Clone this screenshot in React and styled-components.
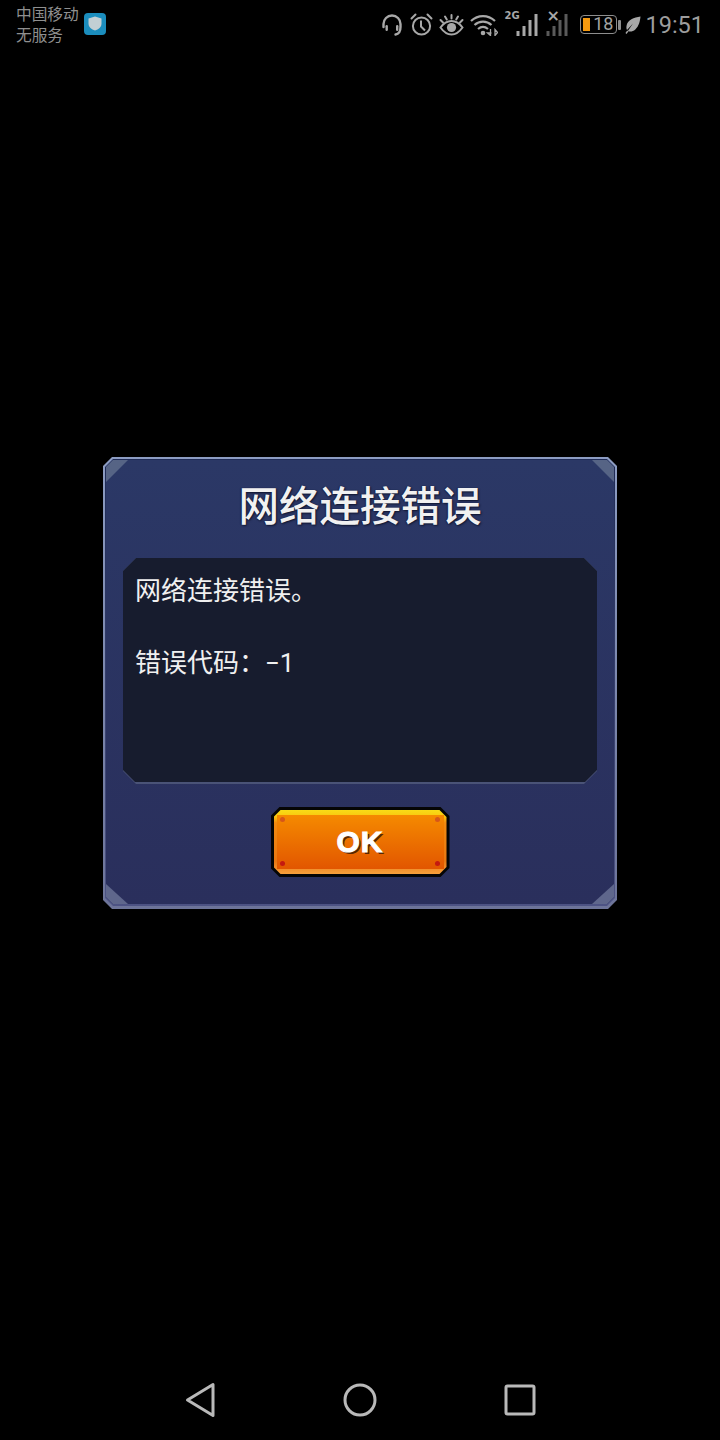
import React from 'react'
import styled, { createGlobalStyle } from 'styled-components'

const chamfer = (n) => `polygon(${n}px 0, calc(100% - ${n}px) 0, 100% ${n}px, 100% calc(100% - ${n}px), calc(100% - ${n}px) 100%, ${n}px 100%, 0 calc(100% - ${n}px), 0 ${n}px)`

const cjk = `"Noto Sans CJK SC", "Noto Sans", sans-serif`

const GlobalStyle = createGlobalStyle`
	html, body {
		margin: 0;
		padding: 0;
		background: #000;
	}
	* {
		box-sizing: border-box;
	}
`

const Screen = styled.div`
	width: 720px;
	height: 1440px;
	background: #000;
	display: flex;
	flex-direction: column;
	overflow: hidden;
`
const StatusBar = styled.div`
	height: 48px;
	padding: 3px 16px 0;
	display: flex;
	justify-content: space-between;
	align-items: flex-start;
	color: #9d9d9d;
`
const Carrier = styled.div`
	display: flex;
	align-items: center;
	gap: 5px;
`
const CarrierText = styled.div`
	font-family: ${cjk};
	font-size: 15.7px;
	line-height: 21px;
	color: #8f8f8f;
`
const ShieldBadge = styled.div`
	width: 22px;
	height: 22px;
	margin-bottom: 1px;
	border-radius: 4px;
	background: #1b8dbd;
	display: flex;
	align-items: center;
	justify-content: center;
`
const StatusIcons = styled.div`
	display: flex;
	align-items: center;
	height: 42px;
	margin-top: -3px;
	padding-top: 7px;
`
const StatusIcon = styled.svg`
	display: block;
	flex: none;
	margin-left: ${(p) => p.$gap || 0}px;
	color: ${(p) => p.$dim ? '#5a5a5a' : '#a8a8a8'};
`
const Battery = styled.div`
	position: relative;
	width: 37px;
	height: 19px;
	margin-left: 11px;
	border: 1.5px solid #8d8d8d;
	border-radius: 4px;
	font-family: Roboto, sans-serif;
	font-size: 18px;
	line-height: 16px;
	color: #a3a3a3;
	text-align: right;
	padding-right: 3px;
`
const BatteryLevel = styled.div`
	position: absolute;
	left: 2px;
	top: 2px;
	bottom: 2px;
	width: 7px;
	background: #f5990f;
`
const BatteryNub = styled.div`
	width: 3px;
	height: 10px;
	margin-left: 1px;
	border-radius: 1px;
	background: #8d8d8d;
`
const Clock = styled.div`
	font-family: Roboto, sans-serif;
	font-size: 23.5px;
	line-height: 28px;
	margin-left: 4px;
	color: #9d9d9d;
`
const Main = styled.main`
	flex: 1;
	padding-top: 409px;
`
const Frame = styled.section`
	width: 514px;
	height: 452px;
	margin: 0 auto;
	padding: 2px 2px 3px;
	background: linear-gradient(#8c9cc2, #6d7499);
	clip-path: ${chamfer(9)};
`
const Rim = styled.div`
	height: 100%;
	padding: 1px 1px 2px;
	background: linear-gradient(#1e2a55, #4d5384);
	clip-path: ${chamfer(8)};
`
const Fill = styled.div`
	position: relative;
	height: 100%;
	padding: 0 18px;
	background: linear-gradient(#2b3866, #2a2f5c);
	clip-path: ${chamfer(7)};
	display: flex;
	flex-direction: column;
	align-items: center;
`
const Corner = styled.div`
	position: absolute;
	width: 22px;
	height: ${(p) => p.$bottom ? 20 : 22}px;
	background: ${(p) => p.$bottom ? '#5f678c' : '#566485'};
	${(p) => p.$bottom ? 'bottom: 0;' : 'top: 0;'}
	${(p) => p.$right ? 'right: 0;' : 'left: 0;'}
	clip-path: ${(p) => {
		if (p.$bottom && p.$right) return 'polygon(100% 0, 100% 100%, 0 100%)'
		if (p.$bottom) return 'polygon(0 0, 100% 100%, 0 100%)'
		if (p.$right) return 'polygon(0 0, 100% 0, 100% 100%)'
		return 'polygon(0 0, 100% 0, 0 100%)'
	}};
`
const Title = styled.h1`
	margin: 0;
	height: 98px;
	font-family: ${cjk};
	font-size: 40.5px;
	font-weight: 500;
	line-height: 87px;
	color: #f1f1f1;
	text-shadow: 1px 1px 2px #10152e, -1px 0 1px #1a2145;
`
const MessageShell = styled.div`
	width: 474px;
	height: 226px;
	padding-bottom: 2px;
	background: #4a5377;
	clip-path: ${chamfer(13)};
`
const Message = styled.div`
	height: 100%;
	padding: 15px 12px 0;
	background: #171c2e;
	clip-path: ${chamfer(12)};
	display: flex;
	flex-direction: column;
	gap: 36px;
`
const MessageLine = styled.p`
	margin: 0;
	font-family: Roboto, ${cjk};
	font-size: 26px;
	line-height: 36px;
	color: #f0f0f0;
`
const OkButton = styled.button`
	display: block;
	width: 179px;
	height: 70px;
	margin-top: 23px;
	padding: 3px;
	border: 0;
	background: #050505;
	clip-path: ${chamfer(9)};
`
const OkRim = styled.div`
	height: 100%;
	padding: 5px 3px 5px;
	background: linear-gradient(#f8dc17 0, #f9c80f 10%, #f28a10 20%, #e87712 80%, #f7a03c 100%);
	clip-path: ${chamfer(7)};
`
const OkFace = styled.div`
	position: relative;
	height: 100%;
	background: linear-gradient(#f58a00, #e25600);
	display: flex;
	align-items: center;
	justify-content: center;
`
const OkLabel = styled.span`
	font-family: "Liberation Sans", sans-serif;
	font-size: 30px;
	font-weight: 700;
	line-height: 1;
	letter-spacing: 1px;
	color: #fff;
	-webkit-text-stroke: 1px #fff;
	text-shadow: 2px 2px 0 #5a2500;
`
const Rivet = styled.i`
	position: absolute;
	width: 5px;
	height: 5px;
	border-radius: 50%;
	background: ${(p) => p.$bottom ? '#c41a10' : '#d6561a'};
	${(p) => p.$bottom ? 'bottom: 3.5px;' : 'top: 1.5px;'}
	${(p) => p.$right ? 'right: 3.5px;' : 'left: 3.5px;'}
`
const NavBar = styled.nav`
	height: 74px;
	padding: 16px 0 0 120px;
	display: grid;
	grid-template-columns: repeat(3, 160px);
	justify-items: center;
	align-items: start;
	color: #b9b9b9;
`
const NavIcon = styled.svg`
	display: block;
`
const NoSim = styled.span`
	position: absolute;
	left: 1px;
	top: -4px;
	font-family: "DejaVu Sans", sans-serif;
	font-size: 16px;
	font-weight: 700;
	line-height: 14px;
	color: #a8a8a8;
`
const NetworkTag = styled.span`
	position: absolute;
	left: -11px;
	top: -2px;
	font-family: "DejaVu Sans", sans-serif;
	font-size: 10px;
	font-weight: 700;
	line-height: 10px;
	color: #a8a8a8;
`
const SignalSlot = styled.div`
	position: relative;
	display: flex;
	margin-left: ${(p) => p.$gap}px;
`

const Headset = () => (
	<StatusIcon width="22" height="22" viewBox="0 0 22 22" fill="none" stroke="currentColor" strokeWidth="2.4">
		<path d="M2.500 13V10a8.500 8.500 0 0 1 17 0v3c0 4-1.500 7-5 7.500" strokeLinecap="round" />
		<rect x="4.500" y="11" width="2.400" height="6" rx="1.200" fill="currentColor" stroke="none" />
		<rect x="15" y="11" width="2.400" height="6" rx="1.200" fill="currentColor" stroke="none" />
	</StatusIcon>
)
const Alarm = () => (
	<StatusIcon $gap={7} width="23" height="23" viewBox="0 0 23 23" fill="none" stroke="currentColor" strokeWidth="2">
		<circle cx="11.500" cy="13" r="8.600" />
		<path d="M11 7.500v6l4 4" />
		<path d="M1.500 5.500 5.500 1.500M21.500 5.500l-4-4" strokeLinecap="round" />
	</StatusIcon>
)
const Eye = () => (
	<StatusIcon $gap={6} width="25" height="22" viewBox="0 0 25 22" fill="none" stroke="currentColor" strokeWidth="2">
		<path d="M1.500 13.500C5 8.500 8.500 7 12.500 7s7.500 1.500 11 6.500c-3.500 5-7 7-11 7s-7.500-2-11-7Z" />
		<circle cx="12.500" cy="13.500" r="4.600" fill="currentColor" stroke="none" />
		<path d="M12.500 1v3.500M6 2.500l1.800 3M19 2.500l-1.800 3M1.500 6l2.500 2.500M23.500 6 21 8.500" strokeLinecap="round" />
	</StatusIcon>
)
const Wifi = () => (
	<StatusIcon $gap={6} width="28" height="22" viewBox="0 0 28 22" fill="none" stroke="currentColor" strokeWidth="2.200">
		<path d="M1 7c7-6.500 17-6.500 24 0M4.500 11c5-4.500 12-4.500 17 0M8 15c3-2.500 7-2.500 10 0" />
		<circle cx="13" cy="19" r="2.300" fill="currentColor" stroke="none" />
		<path d="M20.500 15v6.500l-3-2.500h4M25 15.500v6l2.500-3z" strokeWidth="1.300" />
	</StatusIcon>
)
const Signal = ({ dim }) => (
	<StatusIcon $dim={dim} width="24" height="23" viewBox="0 0 24 23">
		<g fill="currentColor">
			<rect x="1.500" y="18" width="3" height="5" />
			<rect x="7.500" y="13" width="3" height="10" />
			<rect x="13.500" y="7" width="3" height="16" />
			<rect x="19.500" y="1" width="3" height="22" />
		</g>
	</StatusIcon>
)
const Leaf = () => (
	<StatusIcon $gap={4} width="16" height="18" viewBox="0 0 16 18">
		<path d="M15.500 0.500C9 1.500 2.500 3.500 1.500 10c-.3 1.800 0 3 .5 4L8 7.500 2.800 15c2 1 5 .8 7.500-1.500C14 10 15 5 15.500.5Z" fill="currentColor" />
		<path d="M1 17.500 2.800 15" stroke="currentColor" strokeWidth="1.400" />
	</StatusIcon>
)

const App = () => {
	return (
		<Screen>
			<GlobalStyle />
			<StatusBar>
				<Carrier>
					<CarrierText>中国移动<br />无服务</CarrierText>
					<ShieldBadge>
						<svg width="14" height="15" viewBox="0 0 14 15">
							<path d="M7 0.500 13.500 2.500v5c0 3.500-3 6-6.500 7-3.500-1-6.500-3.500-6.500-7v-5Z" fill="#c3cfd4" />
						</svg>
					</ShieldBadge>
				</Carrier>
				<StatusIcons>
					<Headset />
					<Alarm />
					<Eye />
					<Wifi />
					<SignalSlot $gap={17}>
						<NetworkTag>2G</NetworkTag>
						<Signal />
					</SignalSlot>
					<SignalSlot $gap={6}>
						<NoSim>×</NoSim>
						<Signal dim />
					</SignalSlot>
					<Battery>
						<BatteryLevel />
						18
					</Battery>
					<BatteryNub />
					<Leaf />
					<Clock>19:51</Clock>
				</StatusIcons>
			</StatusBar>
			<Main>
				<Frame>
					<Rim>
						<Fill>
							<Corner />
							<Corner $right />
							<Corner $bottom />
							<Corner $bottom $right />
							<Title>网络连接错误</Title>
							<MessageShell>
								<Message>
									<MessageLine>网络连接错误。</MessageLine>
									<MessageLine>错误代码：−1</MessageLine>
								</Message>
							</MessageShell>
							<OkButton>
								<OkRim>
									<OkFace>
										<Rivet />
										<Rivet $right />
										<Rivet $bottom />
										<Rivet $bottom $right />
										<OkLabel>OK</OkLabel>
									</OkFace>
								</OkRim>
							</OkButton>
						</Fill>
					</Rim>
				</Frame>
			</Main>
			<NavBar>
				<NavIcon width="36" height="36" viewBox="0 0 36 36" fill="none" stroke="currentColor" strokeWidth="3" strokeLinejoin="round">
					<path d="M5.500 18 31 2.500v31Z" />
				</NavIcon>
				<NavIcon width="36" height="36" viewBox="0 0 36 36" fill="none" stroke="currentColor" strokeWidth="3">
					<circle cx="18" cy="18" r="15" />
				</NavIcon>
				<NavIcon width="36" height="36" viewBox="0 0 36 36" fill="none" stroke="currentColor" strokeWidth="3" strokeLinejoin="round">
					<rect x="4" y="4" width="28" height="28" rx="1.500" />
				</NavIcon>
			</NavBar>
		</Screen>
	)
}

export default App
